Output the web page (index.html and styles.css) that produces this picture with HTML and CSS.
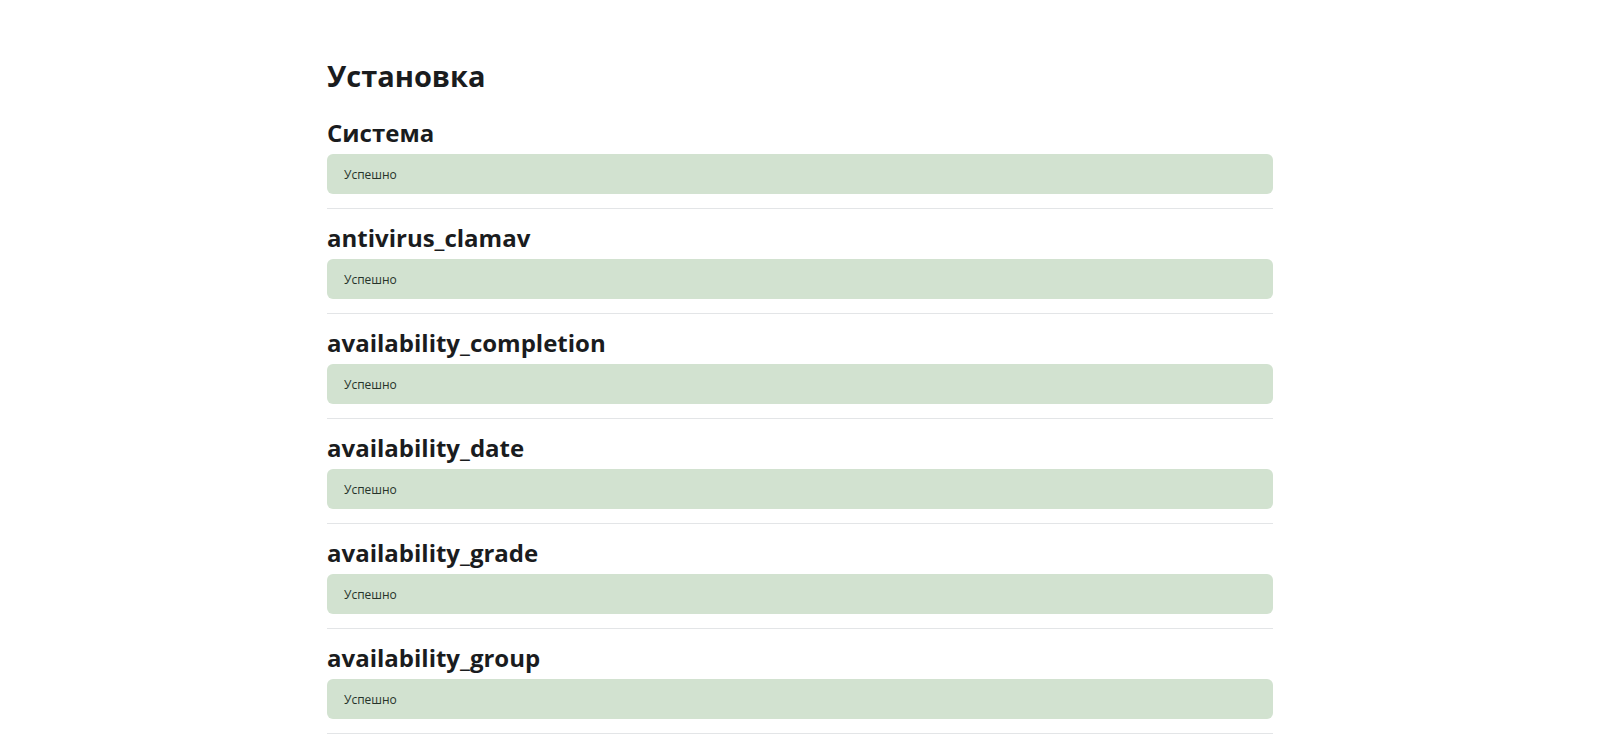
FILE: index.html
```html
<!DOCTYPE html>
<html lang="ru">
<head>
<meta charset="utf-8">
<title>Установка</title>
<link rel="stylesheet" href="styles.css">
</head>
<body>
<div class="page">
  <h2 class="title">Установка</h2>
  <section class="item">
    <h3 class="item-name">Система</h3>
    <div class="alert">Успешно</div>
  </section>
  <section class="item">
    <h3 class="item-name">antivirus_clamav</h3>
    <div class="alert">Успешно</div>
  </section>
  <section class="item">
    <h3 class="item-name">availability_completion</h3>
    <div class="alert">Успешно</div>
  </section>
  <section class="item">
    <h3 class="item-name">availability_date</h3>
    <div class="alert">Успешно</div>
  </section>
  <section class="item">
    <h3 class="item-name">availability_grade</h3>
    <div class="alert">Успешно</div>
  </section>
  <section class="item">
    <h3 class="item-name">availability_group</h3>
    <div class="alert">Успешно</div>
  </section>
</div>
</body>
</html>
```

FILE: styles.css
```css
html, body {
  margin: 0;
  padding: 0;
  background: #fff;
}
body {
  font-family: "Open Sans", "Noto Sans", sans-serif;
  color: #1a1c1e;
}
.page {
  width: 946px;
  margin: 0 auto;
  padding-top: 56px;
}
.title {
  margin: 0 0 23px;
  font-size: 29px;
  line-height: 40px;
  font-weight: 700;
}
.item {
  border-bottom: 1px solid #e3e5e7;
  padding-bottom: 14px;
  margin-bottom: 15px;
}
.item-name {
  margin: 0 0 7px;
  font-size: 24px;
  line-height: 28px;
  font-weight: 700;
}
.alert {
  height: 40px;
  box-sizing: border-box;
  display: flex;
  align-items: center;
  padding: 0 17px;
  background: #d2e2d0;
  border-radius: 6px;
  color: #26332a;
  font-size: 12px;
}
```
